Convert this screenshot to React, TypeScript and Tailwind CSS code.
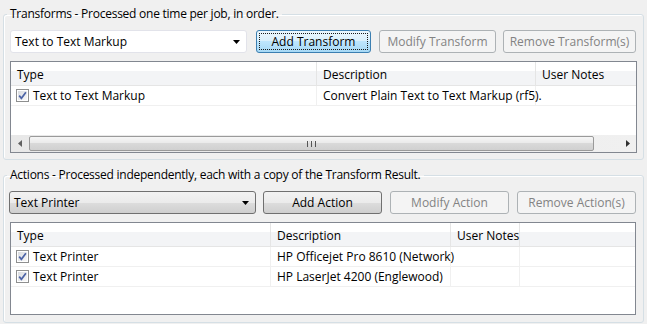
import type { ReactNode } from "react";

type Column = { label: string; width?: number };
type Row = string[];

function CheckBox() {
  return (
    <span className="flex size-[13px] shrink-0 items-center justify-center border border-[#8e8f8f] bg-white p-px">
      <span className="flex size-full items-center justify-center bg-gradient-to-br from-[#d8dbe0] to-[#f8f8f8]">
        <svg width="9" height="9" viewBox="0 0 9 9">
          <path d="M1.2 4.6 L3.4 7.3 L7.9 1.2" fill="none" stroke="#4c63a6" strokeWidth="1.7" />
        </svg>
      </span>
    </span>
  );
}

function Arrow({ dir }: { dir: "down" | "left" | "right" }) {
  if (dir === "down") {
    return (
      <svg width="7" height="4" viewBox="0 0 7 4">
        <path d="M0 0 H7 L3.5 4 Z" fill="#000" />
      </svg>
    );
  }
  return (
    <svg width="4" height="7" viewBox="0 0 4 7">
      <path d={dir === "left" ? "M4 0 V7 L0 3.5 Z" : "M0 0 V7 L4 3.5 Z"} fill={dir === "left" ? "#606060" : "#303030"} />
    </svg>
  );
}

function Combo({ label, white, className }: { label: string; white?: boolean; className: string }) {
  return (
    <div
      className={
        "flex h-[23px] items-center justify-between rounded-[3px] border pl-[4px] pr-[6px] " +
        (white
          ? "border-[#e2e3ea] bg-white"
          : "border-[#707070] bg-[linear-gradient(#f2f2f2_0%,#ebebeb_50%,#dddddd_50%,#cfcfcf_100%)]") +
        " " +
        className
      }
    >
      <span>{label}</span>
      <Arrow dir="down" />
    </div>
  );
}

function Button({ children, kind, className }: { children: ReactNode; kind: "focus" | "normal" | "off"; className: string }) {
  if (kind === "off") {
    return (
      <div className={"flex h-[23px] items-center justify-center rounded-[3px] border border-[#adb2b5] bg-[#f4f4f4] text-[#838383] " + className}>
        {children}
      </div>
    );
  }
  if (kind === "focus") {
    return (
      <div className={"flex h-[23px] rounded-[3px] border border-[#3c7fb1] bg-[linear-gradient(#eaf6fd_0%,#d9f0fc_50%,#bee6fd_50%,#a7d9f5_100%)] p-[2px] " + className}>
        <div className="flex flex-1 items-center justify-center border border-dotted border-[#1a1a1a]">{children}</div>
      </div>
    );
  }
  return (
    <div className={"flex h-[23px] items-center justify-center rounded-[3px] border border-[#707070] bg-[linear-gradient(#f2f2f2_0%,#ebebeb_50%,#dddddd_50%,#cfcfcf_100%)] " + className}>
      {children}
    </div>
  );
}

function ScrollBar() {
  return (
    <div className="flex h-[17px] items-stretch bg-[linear-gradient(90deg,#e8e8e8,#f0f0f0)]">
      <div className="flex w-[18px] items-center justify-center">
        <Arrow dir="left" />
      </div>
      <div className="my-px flex w-[565px] items-center justify-center rounded-[2px] border border-[#9a9a9a] bg-[linear-gradient(#f6f6f6_0%,#e9e9e9_50%,#d9d9d9_50%,#d0d0d0_100%)]">
        <div className="flex gap-px">
          <span className="h-[6px] w-px bg-[#555]" />
          <span className="h-[6px] w-px bg-[#ddd]" />
          <span className="h-[6px] w-px bg-[#555]" />
          <span className="h-[6px] w-px bg-[#ddd]" />
          <span className="h-[6px] w-px bg-[#555]" />
        </div>
      </div>
      <div className="flex-1" />
      <div className="flex w-[17px] items-center justify-center">
        <Arrow dir="right" />
      </div>
    </div>
  );
}

function Grid({ columns, rows, scroll, className }: { columns: Column[]; rows: Row[]; scroll?: boolean; className: string }) {
  return (
    <div className={"flex flex-col border border-[#828790] bg-white " + className}>
      <div className="flex h-[24px] border-b border-[#e5e5e5] bg-[linear-gradient(#ffffff_0%,#ffffff_38%,#f3f4f6_38%,#f3f4f6_100%)]">
        {columns.map((col, i) => (
          <div
            key={i}
            className={"flex items-center whitespace-nowrap border-r border-[#e5e5e5] px-[6px] pt-[2px] " + (col.width ? "shrink-0" : "flex-1 border-r-0")}
            style={col.width ? { width: col.width } : undefined}
          >
            {col.label}
          </div>
        ))}
      </div>
      <div className="flex-1">
        {rows.map((row, r) => (
          <div key={r} className="flex h-[20px] border-b border-[#f0f0f0]">
            {columns.map((col, i) => (
              <div
                key={i}
                className={"flex items-center gap-[4px] border-r border-[#f0f0f0] " + (i === 0 ? "pl-[5px]" : "pl-[6px]") + " " + (col.width ? "shrink-0" : "flex-1 border-r-0")}
                style={col.width ? { width: col.width } : undefined}
              >
                {i === 0 ? <CheckBox /> : null}
                <span className="whitespace-nowrap">{row[i]}</span>
              </div>
            ))}
          </div>
        ))}
      </div>
      {scroll ? <ScrollBar /> : null}
    </div>
  );
}

function Group({ title, children, className }: { title: string; children: ReactNode; className: string }) {
  return (
    <fieldset className={"mx-0 w-[641px] rounded-[3px] border border-[#d5dfe5] px-[6px] pb-0 pt-[8px] shadow-[inset_1px_1px_0_#fff] " + className}>
      <legend className="-ml-[3px] h-[16px] px-[3px] leading-[16px] tracking-[-0.25px]">{title}</legend>
      {children}
    </fieldset>
  );
}

export default function App() {
  return (
    <div className="h-[324px] w-[647px] overflow-hidden bg-[#f0f0f0] px-[3px] pt-[6px] font-['Segoe_UI','Open_Sans',sans-serif] text-[12px] leading-[16px] text-black">
      <Group title="Transforms - Processed one time per job, in order." className="h-[154px]">
        <div className="flex">
          <Combo label="Text to Text Markup" white className="w-[237px]" />
          <Button kind="focus" className="ml-[9px] w-[115px]">Add Transform</Button>
          <Button kind="off" className="ml-[8px] w-[117px]">Modify Transform</Button>
          <Button kind="off" className="ml-[7px] w-[133px]">Remove Transform(s)</Button>
        </div>
        <Grid
          className="mt-[8px] h-[92px] w-[627px]"
          scroll
          columns={[{ label: "Type", width: 306 }, { label: "Description", width: 219 }, { label: "User Notes" }]}
          rows={[["Text to Text Markup", "Convert Plain Text to Text Markup (rf5).", ""]]}
        />
      </Group>
      <Group title="Actions - Processed independently, each with a copy of the Transform Result." className="mt-[7px] h-[156px]">
        <div className="flex">
          <Combo label="Text Printer" className="-ml-px w-[247px]" />
          <Button kind="normal" className="ml-[7px] w-[119px]">Add Action</Button>
          <Button kind="off" className="ml-[8px] w-[119px]">Modify Action</Button>
          <Button kind="off" className="ml-[8px] w-[119px]">Remove Action(s)</Button>
        </div>
        <Grid
          className="mt-[8px] h-[93px] w-[626px]"
          columns={[{ label: "Type", width: 260 }, { label: "Description", width: 180 }, { label: "User Notes", width: 69 }, { label: "" }]}
          rows={[
            ["Text Printer", "HP Officejet Pro 8610 (Network)", "", ""],
            ["Text Printer", "HP LaserJet 4200 (Englewood)", "", ""],
          ]}
        />
      </Group>
    </div>
  );
}
